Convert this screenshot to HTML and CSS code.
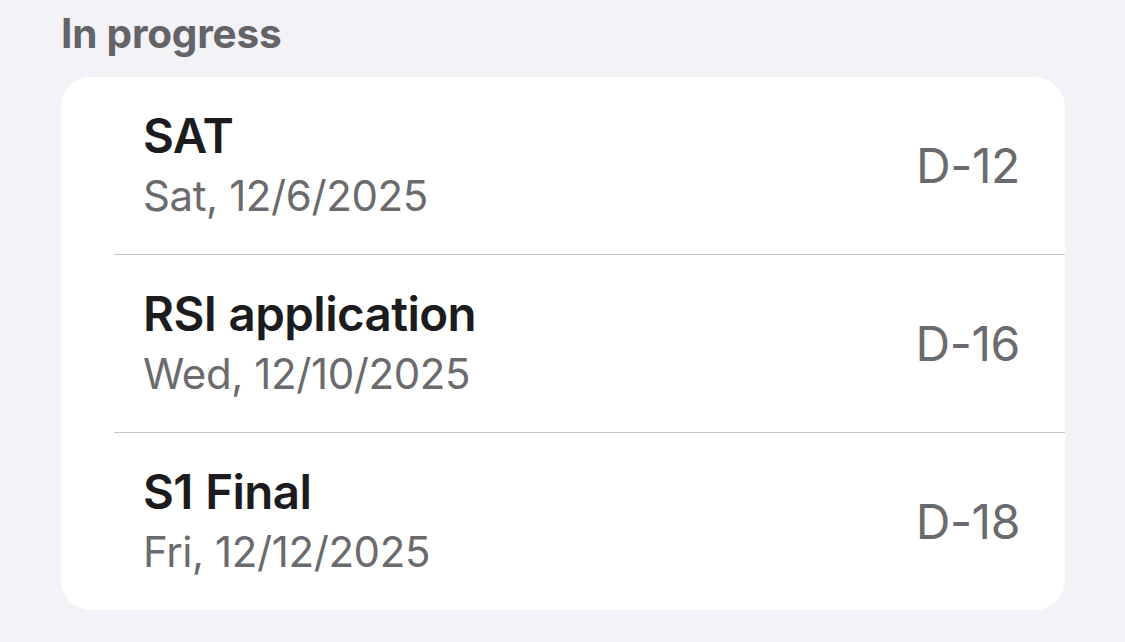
FILE: index.html
```html
<!DOCTYPE html>
<html>
<head>
<meta charset="utf-8">
<link rel="stylesheet" href="styles.css">
</head>
<body>
<main class="page">
  <h2 class="section-title">In progress</h2>
  <section class="card">
    <div class="row">
      <div class="row-text">
        <div class="row-title">SAT</div>
        <div class="row-date">Sat, 12/6/2025</div>
      </div>
      <div class="row-count">D-12</div>
    </div>
    <div class="divider"></div>
    <div class="row">
      <div class="row-text">
        <div class="row-title">RSI application</div>
        <div class="row-date">Wed, 12/10/2025</div>
      </div>
      <div class="row-count">D-16</div>
    </div>
    <div class="divider"></div>
    <div class="row">
      <div class="row-text">
        <div class="row-title">S1 Final</div>
        <div class="row-date">Fri, 12/12/2025</div>
      </div>
      <div class="row-count">D-18</div>
    </div>
  </section>
</main>
</body>
</html>
```
FILE: styles.css
```css
html, body {
  margin: 0;
  padding: 0;
  background: #f2f2f7;
  font-family: Inter, "Noto Sans", "Liberation Sans", sans-serif;
  -webkit-font-smoothing: antialiased;
}

.page {
  padding: 0 60px 0 61px;
  width: 1004px;
}

.section-title {
  margin: 0;
  padding-top: 9px;
  height: 77px;
  box-sizing: border-box;
  font-size: 40.5px;
  line-height: 50px;
  font-weight: 700;
  color: #636368;
  letter-spacing: -0.2px;
}

.card {
  background: #ffffff;
  border-radius: 30px;
  overflow: hidden;
}

.row {
  height: 177px;
  display: flex;
  align-items: center;
  justify-content: space-between;
  padding: 0 45px 0 82px;
  box-sizing: border-box;
}

.row-text {
  display: flex;
  flex-direction: column;
}

.row-title {
  font-size: 47.5px;
  line-height: 58px;
  font-weight: 600;
  color: #1c1c1e;
  letter-spacing: -0.6px;
  word-spacing: 1px;
}

.row-date {
  margin-top: 2px;
  font-size: 42px;
  line-height: 58px;
  font-weight: 400;
  color: #6b6b6e;
  letter-spacing: -0.4px;
}

.row-count {
  font-size: 48px;
  line-height: 58px;
  font-weight: 400;
  color: #6b6b6e;
  letter-spacing: -0.4px;
}

.divider {
  height: 1px;
  margin-left: 53px;
  background: #c6c6c8;
}
```
